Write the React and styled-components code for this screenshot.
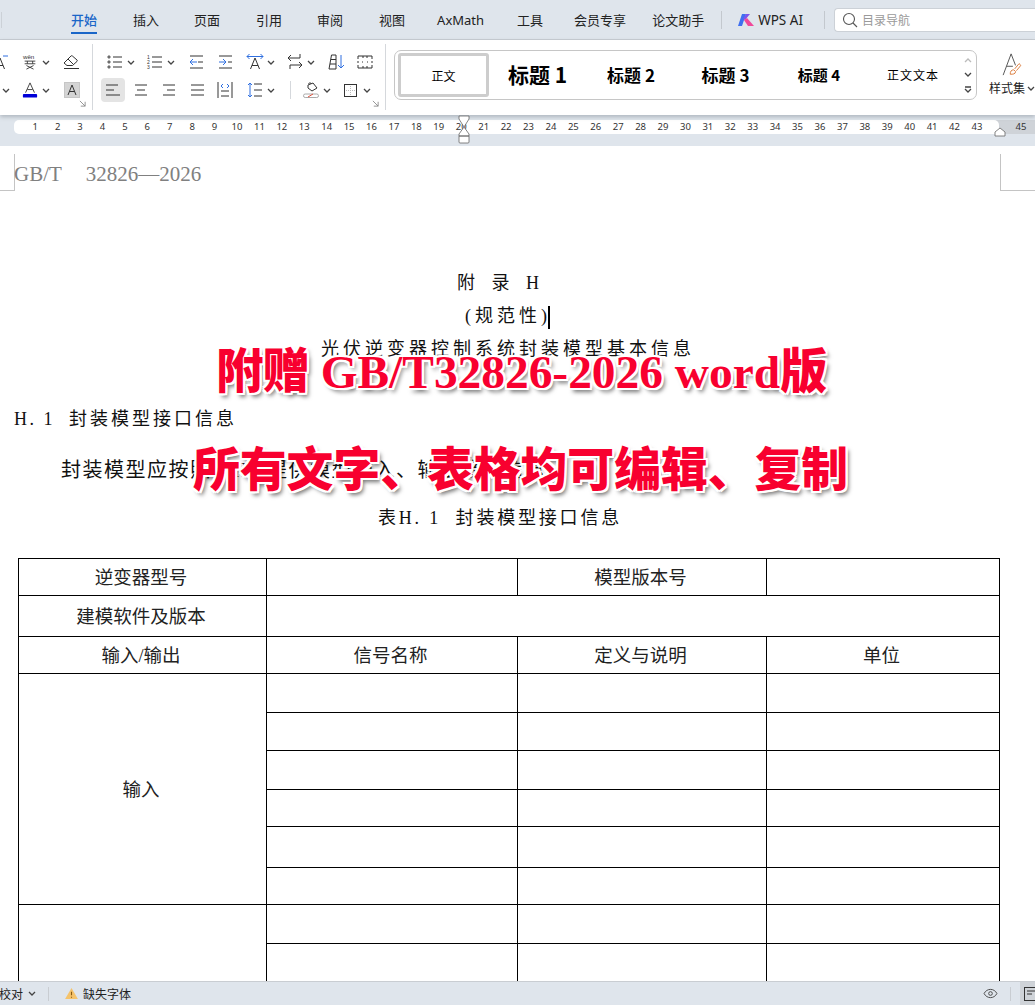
import React from 'react';
import styled, { createGlobalStyle } from 'styled-components';

const cjk = '"Noto Sans CJK SC", sans-serif';
const uiFont = `"Noto Sans", ${cjk}`;
const docFont = `"Liberation Serif", "Noto Sans CJK SC", serif`;

const tabs = [
    { label: '开始', active: true, gap: 36 },
    { label: '插入', gap: 35 },
    { label: '页面', gap: 36 },
    { label: '引用', gap: 35 },
    { label: '审阅', gap: 36 },
    { label: '视图', gap: 32 },
    { label: 'AxMath', gap: 33 },
    { label: '工具', gap: 31 },
    { label: '会员专享', gap: 26 },
    { label: '论文助手', gap: 17 },
];

const rulerNumbers = Array.from({ length: 43 }, (_, i) => i + 1);

const headRows = [
    { height: 37, cells: [{ text: '逆变器型号' }, {}, { text: '模型版本号' }, {}] },
    { height: 41, cells: [{ text: '建模软件及版本' }, { span: 3 }] },
    { height: 37, cells: [{ text: '输入/输出' }, { text: '信号名称' }, { text: '定义与说明' }, { text: '单位' }] },
];
const inputHeights = [39, 38, 39, 37, 41, 37];
const outputHeights = [39, 39];

const Chevron = () => (
    <ChevronSvg viewBox="0 0 8 5"><path d="M1 1l3 3 3-3" /></ChevronSvg>
);

const Lines = ({ rows }) => (
    <>
        {rows.map(([x1, x2, y], i) => <path key={i} d={`M${x1} ${y}H${x2}`} />)}
    </>
);

const BulletIcon = () => (
    <IconSvg viewBox="0 0 16 16">
        <circle cx="2" cy="3" r="1.1" /><circle cx="2" cy="8" r="1.1" /><circle cx="2" cy="13" r="1.1" />
        <Lines rows={[[6, 15, 3], [6, 15, 8], [6, 15, 13]]} />
    </IconSvg>
);

const NumberIcon = () => (
    <IconSvg viewBox="0 0 16 16">
        <text x="0" y="5" fontSize="5" fontFamily="Liberation Sans" fill="#333" stroke="none">1</text>
        <text x="0" y="10" fontSize="5" fontFamily="Liberation Sans" fill="#333" stroke="none">2</text>
        <text x="0" y="15" fontSize="5" fontFamily="Liberation Sans" fill="#333" stroke="none">3</text>
        <Lines rows={[[5, 15, 3], [5, 15, 8], [5, 15, 13]]} />
    </IconSvg>
);

const IndentIcon = ({ flip }) => (
    <IconSvg viewBox="0 0 16 16">
        <Lines rows={[[2, 15, 2], [2, 15, 14], [flip ? 11 : 10, 15, 8]]} />
        <BluePath d={flip ? 'M2 8h7M6 5l3 3-3 3' : 'M9 8H2M5 5L2 8l3 3'} />
    </IconSvg>
);

const TextDirIcon = () => (
    <IconSvg viewBox="0 0 16 16">
        <path d="M3.5 15L8 4l4.5 11M5 11.5h6" />
        <BluePath d="M0 2.5h16M2.5 0L0 2.5 2.5 5M13.5 0L16 2.5 13.5 5" />
    </IconSvg>
);

const CutTextDirIcon = () => (
    <CutIcon viewBox="0 0 16 16">
        <path d="M3.5 15L8 4l4.5 11M5 11.5h6" />
        <BluePath d="M11 2h5" />
    </CutIcon>
);

const SwapIcon = () => (
    <IconSvg viewBox="0 0 16 16">
        <path d="M13 0v4H1M4 1L1 4l3 3M3 11h12M12 8l3 3-3 3M3 11v4" />
    </IconSvg>
);

const SortIcon = () => (
    <IconSvg viewBox="0 0 16 16">
        <path d="M1 15L3.500 1H8v14zM2 10h6M3 5.500h5" />
        <BluePath d="M13 1v13M10 11l3 3 3-3" />
    </IconSvg>
);

const GridIcon = () => (
    <IconSvg viewBox="0 0 16 16">
        <path d="M1 5V2h14v3M1 11v3h14v-3M1 7v2M15 7v2" />
        <path d="M6 2v2M10 2v2M6 12v2M10 12v2M5 8h1M10 8h1" />
    </IconSvg>
);

const AlignIcon = ({ rows }) => (
    <IconSvg viewBox="0 0 16 16"><Lines rows={rows} /></IconSvg>
);

const DistributeIcon = () => (
    <IconSvg viewBox="0 0 16 16">
        <path d="M1 0v16M15 0v16" />
        <Lines rows={[[4, 12, 9], [4, 12, 14]]} />
        <BluePath d="M6 2L4 4l2 2M10 2l2 2-2 2" />
    </IconSvg>
);

const LineSpaceIcon = () => (
    <IconSvg viewBox="0 0 16 16">
        <Lines rows={[[7, 15, 2], [7, 15, 8], [7, 15, 14]]} />
        <BluePath d="M3 1v14M1 3l2-2 2 2M1 13l2 2 2-2" />
    </IconSvg>
);

const FillIcon = () => (
    <IconSvg viewBox="0 0 16 16">
        <path d="M5 3l5-2 4 5-5 3-4-3zM6 2c-1-1 2-2 2 0" />
        <rect x="0.500" y="12" width="15" height="3.500" rx="1.700" stroke="#aaa" />
        <path d="M5 15l5-3" stroke="#e0503c" />
    </IconSvg>
);

const BorderIcon = () => (
    <IconSvg viewBox="0 0 16 16">
        <rect x="1.500" y="2.500" width="12" height="12" />
        <path d="M7.500 4v9M3 8.500h9" stroke="#bbb" strokeDasharray="1 1" />
    </IconSvg>
);

const PhoneticIcon = () => (
    <IconSvg viewBox="0 0 16 18">
        <text x="0" y="6" fontSize="7" fontFamily="Liberation Sans" fill="#333" stroke="none">wěn</text>
        <path d="M2 8h12M5 8v3M11 8v3M2 11h12M4 13l8 4M12 13l-8 4" />
    </IconSvg>
);

const EraserIcon = () => (
    <IconSvg viewBox="0 0 16 16">
        <path d="M1 9l7-7a1 1 0 011.400 0L14 6a1 1 0 010 1.400L9.500 11.500H4zM5 5l5 5" />
        <path d="M1 14.500h15" />
    </IconSvg>
);

const FontColorIcon = () => (
    <IconSvg viewBox="0 0 16 18">
        <path d="M3 12L8 1l5 11M5 8.500h6" />
        <rect x="0" y="13.500" width="16" height="4" rx="1" fill="#0000d8" stroke="none" />
    </IconSvg>
);

const ShadedIcon = () => (
    <ShadedBox>
        <IconSvg viewBox="0 0 16 16"><path d="M4 13L8 3l4 10M5.500 9.500h5" /></IconSvg>
    </ShadedBox>
);

const StyleSetIcon = () => (
    <StyleSvg viewBox="0 0 22 26">
        <path d="M1 25L10 1l5 13M5 15h7" stroke="#444" />
        <path d="M9 24c0-3 1-5 4-5l2 2c0 3-3 3-6 3zM14 18l5-6 2 2-5 6" stroke="#d9722e" />
    </StyleSvg>
);

const WpsLogo = () => (
    <LogoSvg viewBox="0 0 16 12">
        <polygon points="4,0 8,0 4,12 0,12" fill="#3f6ff0" />
        <polygon points="8,0 12,0 7,6 5,5" fill="#7c55ec" />
        <polygon points="6,6 9,4 16,12 10,12" fill="#f0489a" />
    </LogoSvg>
);

const Tool = ({ w, lead, children, chevron }) => (
    <ToolSlot $w={w} $lead={lead}>
        {children}
        {chevron && <Chevron />}
    </ToolSlot>
);

const CenterTool = ({ active, rows }) => (
    <CenterSlot>
        <AlignButton $active={active}><AlignIcon rows={rows} /></AlignButton>
    </CenterSlot>
);

const Launcher = () => (
    <LauncherSvg viewBox="0 0 8 8"><path d="M1 1l6 6M7 2v5H2" /></LauncherSvg>
);

const Ribbon = () => (
    <RibbonBar>
        <FontGroup>
            <ToolRow>
                <CutTextDirIcon />
                <Tool w={41} chevron><PhoneticIcon /></Tool>
                <Tool w={16}><EraserIcon /></Tool>
            </ToolRow>
            <ToolRow>
                <Tool w={22} lead={2}><Chevron /></Tool>
                <Tool w={42} chevron><FontColorIcon /></Tool>
                <ShadedIcon />
            </ToolRow>
            <Launcher />
        </FontGroup>
        <ParagraphGroup>
            <ToolRow $pad={14}>
                <Tool w={40} chevron><BulletIcon /></Tool>
                <Tool w={41} chevron><NumberIcon /></Tool>
                <Tool w={29}><IndentIcon /></Tool>
                <Tool w={30}><IndentIcon flip /></Tool>
                <Tool w={40} chevron><TextDirIcon /></Tool>
                <Tool w={41} chevron><SwapIcon /></Tool>
                <Tool w={29}><SortIcon /></Tool>
                <Tool w={16}><GridIcon /></Tool>
            </ToolRow>
            <ToolRow $pad={6}>
                <CenterTool active rows={[[1, 13, 3], [1, 9, 8], [1, 15, 13]]} />
                <CenterTool rows={[[2, 14, 3], [4, 12, 8], [2, 14, 13]]} />
                <CenterTool rows={[[2, 14, 3], [6, 14, 8], [2, 14, 13]]} />
                <CenterTool rows={[[2, 15, 3], [2, 15, 8], [2, 15, 13]]} />
                <Tool w={36} lead={6}><DistributeIcon /></Tool>
                <Tool w={40} chevron><LineSpaceIcon /></Tool>
                <RowDivider />
                <Tool w={40} chevron><FillIcon /></Tool>
                <Tool w={30} chevron><BorderIcon /></Tool>
            </ToolRow>
            <Launcher />
        </ParagraphGroup>
        <Gallery>
            <SelectedStyle>正文</SelectedStyle>
            <StyleName $w={97} $size={21} $bold>标题 1</StyleName>
            <StyleName $w={90} $size={17} $bold>标题 2</StyleName>
            <StyleName $w={99} $size={17} $bold>标题 3</StyleName>
            <StyleName $w={88} $size={15} $bold>标题 4</StyleName>
            <StyleName $w={100} $size={12} $spacing={1}>正文文本</StyleName>
            <GalleryArrows>
                <ChevronSvg viewBox="0 0 8 5" $light><path d="M1 4l3-3 3 3" /></ChevronSvg>
                <Chevron />
                <ChevronSvg viewBox="0 0 8 7"><path d="M1 1h6M1 3l3 3 3-3" /></ChevronSvg>
            </GalleryArrows>
        </Gallery>
        <StyleSet>
            <StyleSetIcon />
            <StyleSetLabel>样式集<Chevron /></StyleSetLabel>
        </StyleSet>
    </RibbonBar>
);

const Ruler = () => (
    <RulerBand>
        <RulerTrack>
            {rulerNumbers.map((n) => <RulerNum key={n}>{n}</RulerNum>)}
        </RulerTrack>
        <RulerEnd>45</RulerEnd>
        <Hourglass viewBox="0 0 12 29">
            <path d="M1 1h10v3L6 12 1 4zM6 12l5 7v2H1v-2zM1 21h10v6a1 1 0 01-1 1H2a1 1 0 01-1-1z" />
        </Hourglass>
        <RightMarker viewBox="0 0 12 10"><path d="M1 9V5l5-4 5 4v4z" /></RightMarker>
    </RulerBand>
);

const ReportTable = () => (
    <Table>
        <colgroup>
            <col width="248" /><col width="251" /><col width="249" /><col width="233" />
        </colgroup>
        <tbody>
            {headRows.map((row, i) => (
                <Row key={i} $h={row.height}>
                    {row.cells.map((cell, j) => (
                        <Cell key={j} colSpan={cell.span || 1}>{cell.text}</Cell>
                    ))}
                </Row>
            ))}
            {inputHeights.map((h, i) => (
                <Row key={i} $h={h}>
                    {i === 0 && <Cell rowSpan={inputHeights.length}>输入</Cell>}
                    <Cell /><Cell /><Cell />
                </Row>
            ))}
            {outputHeights.map((h, i) => (
                <Row key={i} $h={h}>
                    {i === 0 && <Cell rowSpan={outputHeights.length} />}
                    <Cell /><Cell /><Cell />
                </Row>
            ))}
        </tbody>
    </Table>
);

export default function App() {
    return (
        <Page>
            <GlobalStyle />
            <TabBar>
                <TabEdge />
                {tabs.map((t) => (
                    <Tab key={t.label} $active={t.active} $gap={t.gap}>{t.label}</Tab>
                ))}
                <TabDivider />
                <AiTab><WpsLogo />WPS AI</AiTab>
                <TabDivider />
                <SearchBox>
                    <SearchSvg viewBox="0 0 16 16"><circle cx="7" cy="7" r="5.500" /><path d="M11 11l4 4" /></SearchSvg>
                    目录导航
                </SearchBox>
            </TabBar>
            <Ribbon />
            <Ruler />
            <Doc>
                <PageHeader>
                    <LeftMark />
                    <HeaderText>GB/T<HeaderGap />32826—2026</HeaderText>
                    <RightMark />
                </PageHeader>
                <Centered $top={80} $right={33} $spacing={6}>附 录 H</Centered>
                <Centered $top={9} $right={20} $spacing={4}>(规范性)<Caret /></Centered>
                <Centered $top={9} $right={19} $spacing={4}>光伏逆变器控制系统封装模型基本信息</Centered>
                <SectionTitle><SectionNo>H. 1</SectionNo>封装模型接口信息</SectionTitle>
                <BodyText>封装模型应按照表H.1提供模型输入、输出接口信息。</BodyText>
                <Centered $top={24} $right={35} $spacing={2.8}>表H. 1&nbsp;&nbsp;封装模型接口信息</Centered>
                <ReportTable />
                <Banner $top={345} $left={216} $size={47.400}><TightCjk>附赠</TightCjk> GB/T32826-2026 word版</Banner>
                <Banner $top={443} $left={193} $size={46.800}>所有文字、表格均可编辑、复制</Banner>
            </Doc>
            <StatusBar>
                <StatusText>校对<Chevron /></StatusText>
                <StatusDivider />
                <WarnSvg viewBox="0 0 14 12">
                    <path d="M7 0l7 12H0z" fill="#f5c36b" />
                    <path d="M7 4v4M7 9.500v1" stroke="#8a5a10" strokeWidth="1.200" />
                </WarnSvg>
                <StatusText>缺失字体</StatusText>
                <StatusRight>
                    <EyeSvg viewBox="0 0 16 12">
                        <path d="M1 6c3-6 11-6 14 0-3 6-11 6-14 0z" /><circle cx="8" cy="6" r="2" />
                    </EyeSvg>
                    <StatusDivider />
                    <ViewButton>
                        <IconSvg viewBox="0 0 16 16">
                            <rect x="1.500" y="1.500" width="13" height="13" />
                            <path d="M4 5h8M4 8h5" />
                        </IconSvg>
                    </ViewButton>
                </StatusRight>
            </StatusBar>
        </Page>
    );
}

const GlobalStyle = createGlobalStyle`
    html, body {
        margin: 0;
        padding: 0;
        background: #fff;
    }
`;

const Page = styled.div`
    width: 1035px;
    height: 1005px;
    display: flex;
    flex-direction: column;
    overflow: hidden;
    font-family: ${uiFont};
    color: #222;
`;

const TabBar = styled.div`
    flex: none;
    height: 39px;
    display: flex;
    align-items: center;
    background: #dfe5ec;
    border-bottom: 1px solid #c8cdd3;
    white-space: nowrap;
`;

const TabEdge = styled.div`
    width: 1px;
    height: 16px;
    margin: 0 69px 0 1px;
    background: #ccd1d7;
`;

const Tab = styled.div`
    position: relative;
    height: 39px;
    line-height: 41px;
    margin-right: ${(p) => p.$gap}px;
    font-size: 13px;
    color: ${(p) => (p.$active ? '#1a66c8' : '#222')};
    font-weight: ${(p) => (p.$active ? 500 : 400)};
    &::after {
        content: '';
        display: ${(p) => (p.$active ? 'block' : 'none')};
        position: absolute;
        left: 0;
        right: 0;
        top: 32px;
        height: 2px;
        background: #1a66c8;
    }
`;

const TabDivider = styled.div`
    width: 1px;
    height: 18px;
    background: #c3c8ce;
`;

const AiTab = styled.div`
    display: flex;
    align-items: center;
    gap: 4px;
    padding: 0 21px 0 16px;
    font-size: 13.500px;
`;

const LogoSvg = styled.svg`
    width: 16px;
    height: 12px;
`;

const SearchBox = styled.div`
    flex: 1;
    height: 22px;
    margin-left: 9px;
    display: flex;
    align-items: center;
    gap: 4px;
    padding-left: 7px;
    background: #fff;
    border: 1px solid #ccd1d7;
    border-right: 0;
    border-radius: 4px 0 0 4px;
    font-size: 12px;
    color: #9a9a9a;
`;

const SearchSvg = styled.svg`
    width: 16px;
    height: 16px;
    fill: none;
    stroke: #555;
    stroke-width: 1.100;
`;

const RibbonBar = styled.div`
    position: relative;
    z-index: 2;
    flex: none;
    height: 75px;
    display: flex;
    background: #fff;
    box-shadow: 0 2px 4px rgba(90, 100, 110, 0.35);
`;

const ToolGroup = styled.div`
    position: relative;
    flex: none;
    margin-top: 4px;
    height: 66px;
    padding-top: 6px;
    box-sizing: border-box;
    display: flex;
    flex-direction: column;
    gap: 4px;
    border-right: 1px solid #d5d8dc;
`;

const FontGroup = styled(ToolGroup)`
    width: 93px;
`;

const ParagraphGroup = styled(ToolGroup)`
    width: 293px;
`;

const ToolRow = styled.div`
    height: 24px;
    display: flex;
    align-items: center;
    padding-left: ${(p) => p.$pad || 0}px;
`;

const ToolSlot = styled.div`
    flex: none;
    box-sizing: border-box;
    width: ${(p) => p.$w}px;
    padding-left: ${(p) => p.$lead || 0}px;
    display: flex;
    align-items: center;
    gap: 4px;
`;

const CenterSlot = styled.div`
    flex: none;
    width: 28px;
    display: flex;
    justify-content: center;
`;

const AlignButton = styled.div`
    width: 24px;
    height: 24px;
    display: flex;
    align-items: center;
    justify-content: center;
    border-radius: 4px;
    background: ${(p) => (p.$active ? '#e4e4e4' : 'transparent')};
`;

const RowDivider = styled.div`
    flex: none;
    width: 1px;
    height: 18px;
    margin: 0 12px 0 3px;
    background: #d5d8dc;
`;

const IconSvg = styled.svg`
    flex: none;
    width: 16px;
    height: 16px;
    fill: none;
    stroke: #333;
    stroke-width: 1;
    overflow: visible;
`;

const CutIcon = styled(IconSvg)`
    margin-left: -8px;
    margin-right: 14px;
`;

const BluePath = styled.path`
    stroke: #2f6fe0;
`;

const ChevronSvg = styled.svg`
    flex: none;
    width: 8px;
    height: ${(p) => (p.viewBox.endsWith('7') ? 7 : 5)}px;
    fill: none;
    stroke: ${(p) => (p.$light ? '#bbb' : '#444')};
    stroke-width: 1.300;
`;

const ShadedBox = styled.div`
    flex: none;
    width: 16px;
    height: 16px;
    background: #d4d4d4;
    border: 1px solid #c6c6c6;
    box-sizing: border-box;
    display: flex;
    align-items: center;
    justify-content: center;
`;

const LauncherSvg = styled.svg`
    position: absolute;
    right: 6px;
    bottom: 3px;
    width: 7px;
    height: 7px;
    fill: none;
    stroke: #888;
    stroke-width: 1;
`;

const Gallery = styled.div`
    flex: none;
    width: 583px;
    height: 50px;
    margin: 10px 0 0 8px;
    box-sizing: border-box;
    display: flex;
    align-items: center;
    padding-left: 3px;
    border: 1px solid #c6c6c6;
    border-radius: 7px;
    font-family: ${cjk};
    color: #000;
    white-space: nowrap;
`;

const SelectedStyle = styled.div`
    flex: none;
    width: 91px;
    height: 44px;
    box-sizing: border-box;
    border: 3px solid #cdcdcd;
    border-radius: 3px;
    display: flex;
    align-items: center;
    justify-content: center;
    font-size: 12px;
`;

const StyleName = styled.div`
    flex: none;
    width: ${(p) => p.$w}px;
    margin-top: -2px;
    text-align: center;
    font-size: ${(p) => p.$size}px;
    font-weight: ${(p) => (p.$bold ? 700 : 400)};
    letter-spacing: ${(p) => p.$spacing || 0}px;
`;

const GalleryArrows = styled.div`
    flex: none;
    margin-left: 1px;
    height: 44px;
    display: flex;
    flex-direction: column;
    align-items: center;
    justify-content: space-around;
`;

const StyleSet = styled.div`
    flex: 1;
    display: flex;
    flex-direction: column;
    align-items: center;
    padding: 13px 0 0 12px;
    font-size: 12px;
`;

const StyleSvg = styled.svg`
    width: 20px;
    height: 23px;
    fill: none;
    stroke-width: 1;
`;

const StyleSetLabel = styled.div`
    display: flex;
    align-items: center;
    gap: 2px;
    margin-top: 3px;
    white-space: nowrap;
`;

const RulerBand = styled.div`
    position: relative;
    flex: none;
    height: 31px;
    box-sizing: border-box;
    padding-top: 5px;
    display: flex;
    align-items: flex-start;
    background: #dfe5ec;
`;

const RulerTrack = styled.div`
    flex: none;
    width: 985px;
    height: 14px;
    margin-left: 14px;
    box-sizing: border-box;
    padding-left: 10px;
    display: flex;
    background: #fff;
    border-radius: 5px;
    position: relative;
    z-index: 1;
`;

const RulerNum = styled.span`
    flex: none;
    width: 22.430px;
    text-align: center;
    font-size: 9.500px;
    line-height: 14px;
    color: #333;
`;

const RulerEnd = styled.div`
    flex: 1;
    height: 14px;
    margin-left: -8px;
    padding-left: 16px;
    text-align: center;
    font-size: 9.500px;
    line-height: 14px;
    color: #333;
    background: #cfd3d8;
`;

const Hourglass = styled.svg`
    position: absolute;
    z-index: 2;
    left: 458px;
    top: 0;
    width: 12px;
    height: 29px;
    fill: #fff;
    stroke: #666;
    stroke-width: 0.800;
`;

const RightMarker = styled.svg`
    position: absolute;
    z-index: 2;
    left: 994px;
    top: 12px;
    width: 12px;
    height: 10px;
    fill: #fff;
    stroke: #666;
    stroke-width: 0.800;
`;

const Doc = styled.div`
    position: relative;
    flex: 1;
    min-height: 0;
    overflow: hidden;
    background: #fff;
    font-family: ${docFont};
    color: #111;
`;

const PageHeader = styled.div`
    height: 37px;
    margin-top: 8px;
    display: flex;
`;

const LeftMark = styled.div`
    flex: none;
    width: 14px;
    border-right: 1px solid #c4c4c4;
    border-bottom: 1px solid #c4c4c4;
`;

const RightMark = styled.div`
    flex: none;
    width: 34px;
    border-left: 1px solid #c4c4c4;
    border-bottom: 1px solid #c4c4c4;
`;

const HeaderText = styled.div`
    flex: 1;
    margin-left: -1px;
    padding-top: 6px;
    font-size: 21px;
    line-height: 28px;
    color: #808080;
`;

const HeaderGap = styled.span`
    display: inline-block;
    width: 24px;
`;

const Centered = styled.div`
    margin-top: ${(p) => p.$top}px;
    padding-right: ${(p) => p.$right}px;
    height: 24px;
    line-height: 24px;
    text-align: center;
    font-size: 18px;
    letter-spacing: ${(p) => p.$spacing}px;
    white-space: nowrap;
`;

const Caret = styled.span`
    display: inline-block;
    width: 2px;
    height: 23px;
    margin-left: -3px;
    vertical-align: middle;
    background: #000;
`;

const SectionTitle = styled.div`
    margin-top: 46px;
    padding-left: 14px;
    height: 24px;
    line-height: 24px;
    font-size: 18px;
    letter-spacing: 3px;
    white-space: nowrap;
`;

const SectionNo = styled.span`
    display: inline-block;
    width: 55px;
    letter-spacing: 2.500px;
`;

const BodyText = styled.div`
    margin-top: 27px;
    padding-left: 61px;
    height: 24px;
    line-height: 24px;
    font-size: 20px;
    letter-spacing: 1.500px;
    white-space: nowrap;
`;

const Table = styled.table`
    width: 981px;
    margin: 28px 0 0 18px;
    border-collapse: collapse;
    table-layout: fixed;
    font-size: 18.500px;
    color: #222;
`;

const Row = styled.tr`
    height: ${(p) => p.$h}px;
`;

const Cell = styled.td`
    padding: 1px 3px 0 0;
    border: 1px solid #000;
    text-align: center;
    vertical-align: middle;
    line-height: 20px;
`;

const Banner = styled.div`
    position: absolute;
    top: ${(p) => p.$top - 145}px;
    left: ${(p) => p.$left}px;
    font-size: ${(p) => p.$size}px;
    line-height: 52px;
    font-weight: 900;
    color: #f8002f;
    white-space: nowrap;
    text-shadow: -2px -2px 0 #fff, 2px -2px 0 #fff, -2px 2px 0 #fff, 2px 2px 0 #fff,
        0 -2px 0 #fff, 0 2px 0 #fff, -2px 0 0 #fff, 2px 0 0 #fff,
        3px 4px 4px rgba(0, 0, 0, 0.55);
`;

const TightCjk = styled.span`
    letter-spacing: -1px;
`;

const StatusBar = styled.div`
    position: relative;
    z-index: 2;
    flex: none;
    height: 24px;
    box-sizing: border-box;
    display: flex;
    align-items: center;
    background: #dfe5ec;
    border-top: 1px solid #c9cdd2;
    font-size: 12px;
`;

const StatusText = styled.div`
    display: flex;
    align-items: center;
    gap: 5px;
    &:first-child {
        margin-left: -1px;
    }
`;

const StatusDivider = styled.div`
    flex: none;
    width: 1px;
    height: 14px;
    margin: 0 16px 0 12px;
    background: #c9cdd2;
`;

const WarnSvg = styled.svg`
    width: 13px;
    height: 11px;
    margin-right: 5px;
    fill: none;
`;

const StatusRight = styled.div`
    margin-left: auto;
    display: flex;
    align-items: center;
`;

const EyeSvg = styled.svg`
    width: 15px;
    height: 11px;
    fill: none;
    stroke: #444;
    stroke-width: 1;
`;

const ViewButton = styled.div`
    width: 15px;
    height: 23px;
    margin-left: -7px;
    display: flex;
    align-items: center;
    padding-left: 3px;
    box-sizing: border-box;
    background: #cfd3d8;
`;
